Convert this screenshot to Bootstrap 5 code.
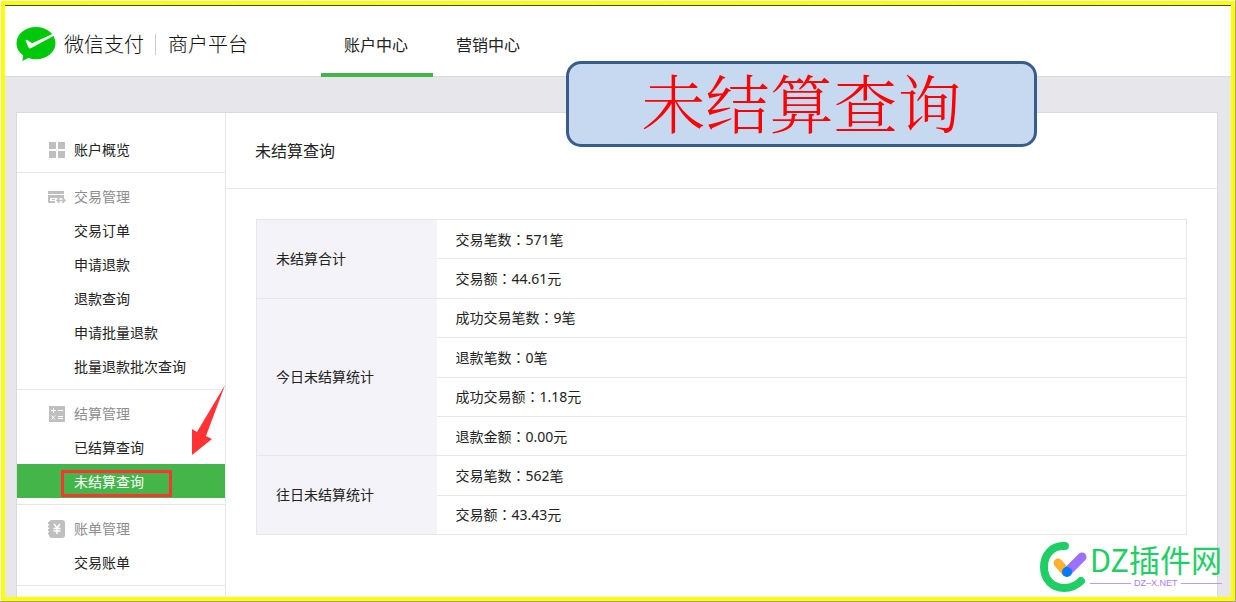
<!DOCTYPE html>
<html lang="zh-CN">
<head>
<meta charset="utf-8">
<meta name="viewport" content="width=device-width, initial-scale=1">
<title>微信支付商户平台 - 未结算查询</title>
<link rel="stylesheet" href="https://cdn.jsdelivr.net/npm/bootstrap@5.3.0/dist/css/bootstrap.min.css">
<style>
  :root { --green: #44b549; --line: #e7e7eb; --edge: #d9dadc; }
  body {
    font-family: "Noto Sans", "Noto Sans CJK SC", sans-serif;
    font-size: 14px; line-height: 20px; color: #222;
    padding: 1px;
    background:
      linear-gradient(#a5a5a5, #a5a5a5) right / 1px 100% no-repeat,
      linear-gradient(#a5a5a5, #a5a5a5) bottom / 100% 1px no-repeat,
      repeating-linear-gradient(90deg, transparent 0 17px, #d0d0d5 17px 18px, transparent 18px 72px) #fff;
  }
  .page-frame { border: 4px solid #ff0; min-height: calc(100vh - 2px); background: #e7e7eb; }
  .site-header { background: #fff; border-top: 1px solid #444; border-bottom: 1px solid var(--edge); height: 72px; padding-left: 11px; }
  .brand-box { width: 305px; padding-top: 6px; }
  .brand-text { font-family: "Noto Sans CJK SC", sans-serif; font-weight: 300; font-size: 20px; line-height: 28px; color: #111; }
  .brand-rule { width: 1px; height: 21px; background: #ccc; margin: 0 12px 0 11px; }
  .top-link { width: 112px; font-size: 16px; line-height: 24px; color: #222; text-decoration: none; padding: 27px 2px 0 0; height: 71px; border-bottom: 4px solid transparent; }
  .top-link.active { border-color: var(--green); }
  .panel { margin: 35px 13px 0 11px; background: #fff; border: 1px solid var(--edge); border-bottom: 0; }
  .side { width: 209px; border-right: 1px solid var(--line); }
  .side-group { padding: 6px 0; border-bottom: 1px solid var(--line); }
  .side-group.first { padding-top: 19px; }
  .side-row { display: flex; align-items: center; height: 34px; padding: 2px 0 0 57px; color: #222; text-decoration: none; }
  .side-row.head { padding-left: 30px; gap: 7px; }
  .side-row.muted { color: #8d8d8d; }
  .side-row.active { background: var(--green); color: #fff; }
  .side-row.head svg { width: 20px; height: 18px; flex: none; }
  .mark-box { position: absolute; left: 44px; top: 6px; width: 111px; height: 27px; border: 3px solid #f33; }
  .mark-arrow { position: absolute; right: 0; bottom: 42px; width: 35px; height: 71px; }
  .page-title { font-size: 16px; line-height: 24px; font-weight: 400; padding: 26px 29px 25px; margin: 0; border-bottom: 1px solid var(--line); }
  .table-area { padding: 30px; }
  .stat { width: 100%; height: 316px; border-collapse: collapse; border: 1px solid var(--line); }
  .stat th, .stat td { padding: 0 19px; border-top: 1px solid var(--line); }
  .stat th { width: 180px; font-weight: 400; background: #f4f3f9; }
  .cn-colon { font-family: "Noto Sans CJK TC", sans-serif; }
  .callout { position: absolute; left: 561px; right: 194px; top: 56px; height: 86px; border: 3px solid #385d8a; border-radius: 15px; background: #c6d9f1; color: #f00; font-family: "Noto Serif CJK SC", "Noto Sans CJK SC", serif; font-weight: 300; font-size: 64px; line-height: 72px; }
  .stamp { position: absolute; right: 9px; bottom: 4px; gap: 2px; }
  .stamp svg { width: 49px; height: 52px; }
  .stamp-words { padding-bottom: 5px; }
  .stamp-name { font-family: "Noto Sans CJK SC", sans-serif; font-size: 31px; line-height: 38px; color: #1fcf65; }
  .stamp-site { font-family: "Liberation Sans", sans-serif; font-size: 9px; line-height: 10px; color: #a57cf5; gap: 3px; }
  .stamp-site::before, .stamp-site::after { content: ""; flex: 1; height: 1px; background: #b99af8; }
</style>
<script src="https://cdn.jsdelivr.net/npm/bootstrap@5.3.0/dist/js/bootstrap.bundle.min.js"></script>
</head>
<body>
<div class="page-frame position-relative d-flex flex-column">
  <header class="site-header d-flex">
    <div class="brand-box d-flex align-items-center">
      <svg width="40" height="36" viewBox="0 0 40 36" aria-hidden="true">
        <path fill="#00c80b" d="M20 1C9.200 1 .5 8.200.5 17.200c0 5 2.600 9.300 6.800 12.300L6.300 35l6-3.100c2.400.8 5 1.300 7.700 1.300 10.800 0 19.500-7.200 19.500-16C39.500 8.200 30.800 1 20 1z"/>
        <path fill="#fff" d="M9.500 14.500c.5-1.300 1.500-.9 2.300-.3l3.400 2.500c.7.4 1.200.4 2 .1L36.500 8l1.300 1.700-23 12.600c-1 .5-1.700.2-2.200-.8z"/>
      </svg>
      <span class="brand-text ms-2">微信支付</span><span class="brand-rule"></span><span class="brand-text">商户平台</span>
    </div>
    <nav class="d-flex text-center">
      <a class="top-link active" href="#">账户中心</a>
      <a class="top-link" href="#">营销中心</a>
    </nav>
  </header>

  <div class="panel d-flex flex-grow-1">
    <nav class="side flex-shrink-0">
      <div class="side-group first">
        <a class="side-row head" href="#">
          <svg viewBox="0 0 20 18" fill="#bfbfbf"><path d="M2 1h7v7H2zM11 1h7v7h-7zM2 10h7v7H2zM11 10h7v7h-7z"/></svg>账户概览</a>
      </div>
      <div class="side-group">
        <div class="side-row head muted">
          <svg viewBox="0 0 20 18"><path fill="#bfbfbf" d="M1 3h16v3H1zM1 7h16v3H1zM1 10h2v5H1zM1 13h7v2H1zM5 11h3v1H5z"/><path fill="none" stroke="#bfbfbf" stroke-width="1.500" d="M12.500 10L10 12.500l2.500 2.500M15.500 10l2.500 2.500-2.500 2.500M10.500 12.500h7"/></svg>交易管理</div>
        <a class="side-row" href="#">交易订单</a>
        <a class="side-row" href="#">申请退款</a>
        <a class="side-row" href="#">退款查询</a>
        <a class="side-row" href="#">申请批量退款</a>
        <a class="side-row" href="#">批量退款批次查询</a>
      </div>
      <div class="side-group">
        <div class="side-row head muted">
          <svg viewBox="0 0 20 18"><path fill="#bfbfbf" d="M2 1h16v16H2z"/><path fill="none" stroke="#fff" d="M4 5.500h5M6.500 3v5M11 5.500h5M4.500 10.500l3.500 4M8 10.500l-3.500 4M11 11.500h5M11 13.500h5"/></svg>结算管理</div>
        <a class="side-row" href="#">已结算查询</a>
        <a class="side-row active position-relative" href="#">未结算查询
          <span class="mark-box"></span>
          <svg class="mark-arrow" viewBox="0 0 35 71" aria-hidden="true"><path fill="#f33" d="M35 0L16 51l6 3L2 70V44l5 3z"/></svg>
        </a>
      </div>
      <div class="side-group">
        <div class="side-row head muted">
          <svg viewBox="0 0 20 18"><rect x="2" y="0" width="16" height="18" rx="3" fill="#bfbfbf"/><path stroke="#bfbfbf" stroke-width="2" stroke-dasharray="2 1.500" d="M2 2v14"/><path fill="none" stroke="#fff" stroke-width="1.500" d="M7 4l3 4 3-4M6.500 8.500h7M6.500 11h7M10 8v6"/></svg>账单管理</div>
        <a class="side-row" href="#">交易账单</a>
      </div>
    </nav>

    <main class="flex-grow-1">
      <h1 class="page-title">未结算查询</h1>
      <div class="table-area">
        <table class="stat">
          <tbody>
            <tr><th scope="rowgroup" rowspan="2">未结算合计</th><td>交易笔数<span class="cn-colon" lang="zh-TW">：</span>571笔</td></tr>
            <tr><td>交易额<span class="cn-colon" lang="zh-TW">：</span>44.61元</td></tr>
            <tr><th scope="rowgroup" rowspan="4">今日未结算统计</th><td>成功交易笔数<span class="cn-colon" lang="zh-TW">：</span>9笔</td></tr>
            <tr><td>退款笔数<span class="cn-colon" lang="zh-TW">：</span>0笔</td></tr>
            <tr><td>成功交易额<span class="cn-colon" lang="zh-TW">：</span>1.18元</td></tr>
            <tr><td>退款金额<span class="cn-colon" lang="zh-TW">：</span>0.00元</td></tr>
            <tr><th scope="rowgroup" rowspan="2">往日未结算统计</th><td>交易笔数<span class="cn-colon" lang="zh-TW">：</span>562笔</td></tr>
            <tr><td>交易额<span class="cn-colon" lang="zh-TW">：</span>43.43元</td></tr>
          </tbody>
        </table>
      </div>
    </main>
  </div>

  <div class="callout text-center">未结算查询</div>

  <div class="stamp d-flex align-items-end">
    <svg viewBox="0 0 49 52" fill="none" stroke-linecap="round" aria-hidden="true">
      <path stroke="#1fcf65" stroke-width="8" d="M26 5C13 4 5 14 5 26c0 13 9 21 20 21 7 0 12-2 17-7"/>
      <path stroke="#ffb02e" stroke-width="9" d="M19 22l8 9"/>
      <path stroke="#9b72ff" stroke-width="9" d="M43 16L28 31"/>
      <circle cx="28" cy="31" r="5" fill="#007bff"/>
    </svg>
    <div class="stamp-words">
      <div class="stamp-name">DZ插件网</div>
      <div class="stamp-site d-flex align-items-center">DZ–X.NET</div>
    </div>
  </div>
</div>
</body>
</html>
